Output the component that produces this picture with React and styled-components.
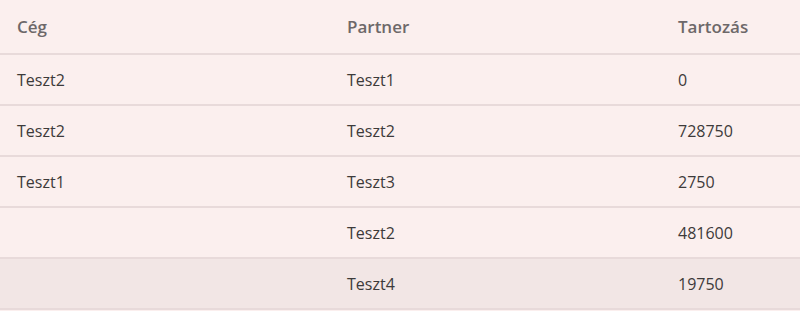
import React from "react";
import styled, { createGlobalStyle } from "styled-components";

const Global = createGlobalStyle`
  html, body { margin: 0; padding: 0; background: #fbefee; }
  body { font-family: "Open Sans", "Noto Sans", sans-serif; }
`;

const Table = styled.table`
  width: 800px;
  border-collapse: collapse;
  background: #fbefee;
  font-size: 16px;
  table-layout: fixed;
`;

const Th = styled.th`
  box-sizing: border-box;
  text-align: left;
  font-weight: 600;
  font-size: 17px;
  color: #6d6869;
  height: 54px;
  padding: 0 17px;
  border-bottom: 2px solid #e8dada;
  width: ${(p) => p.$w};
`;

const Row = styled.tr`
  background: ${(p) => (p.$hover ? "#f2e6e5" : "transparent")};
`;

const Td = styled.td`
  box-sizing: border-box;
  color: #3d3a3a;
  height: 51px;
  padding: 0 17px;
  border-bottom: 2px solid #e8dada;
`;

const rows = [
  ["Teszt2", "Teszt1", "0"],
  ["Teszt2", "Teszt2", "728750"],
  ["Teszt1", "Teszt3", "2750"],
  ["", "Teszt2", "481600"],
  ["", "Teszt4", "19750"],
];

export default function App() {
  return (
    <>
      <Global />
      <Table>
        <thead>
          <tr>
            <Th $w="330px">Cég</Th>
            <Th $w="331px">Partner</Th>
            <Th>Tartozás</Th>
          </tr>
        </thead>
        <tbody>
          {rows.map((r, i) => (
            <Row key={i} $hover={i === rows.length - 1}>
              {r.map((c, j) => (
                <Td key={j}>{c}</Td>
              ))}
            </Row>
          ))}
        </tbody>
      </Table>
    </>
  );
}
